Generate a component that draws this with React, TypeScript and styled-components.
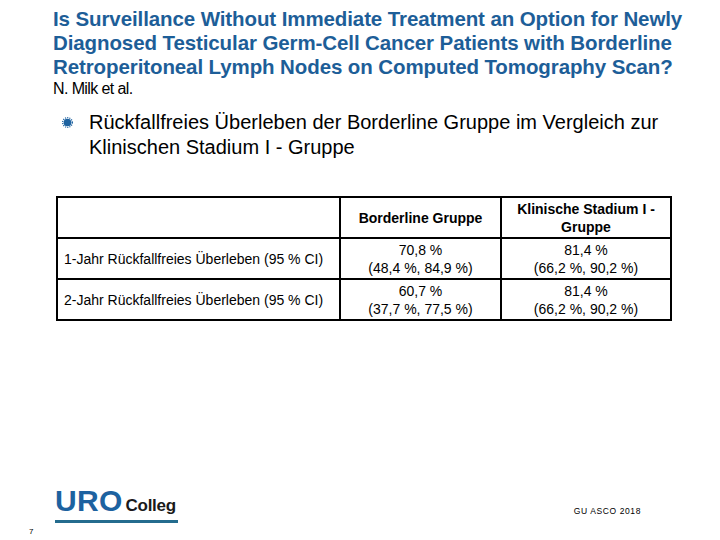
import React from 'react'
import styled, { createGlobalStyle } from 'styled-components'

const GlobalStyle = createGlobalStyle`
  html, body {
    margin: 0;
    padding: 0;
    background: #ffffff;
  }
  body {
    font-family: 'Liberation Sans', Arial, sans-serif;
    color: #000;
  }
`

const Slide = styled.div`
  width: 720px;
  height: 540px;
  position: relative;
  overflow: hidden;
  display: flex;
  flex-direction: column;
`

const Header = styled.div`
  padding: 7px 0 0 53px;
`

const Title = styled.h1`
  margin: 0;
  font-size: 20.5px;
  line-height: 24px;
  font-weight: 700;
  color: #1d5e98;
  letter-spacing: -0.1px;
  white-space: nowrap;
`

const Authors = styled.p`
  margin: 1px 0 0;
  font-size: 16px;
  line-height: 18px;
  letter-spacing: -0.6px;
`

const BulletRow = styled.div`
  display: flex;
  align-items: flex-start;
  gap: 16px;
  padding: 12px 0 0 62px;
`

const Bullet = styled.span`
  flex: none;
  width: 11px;
  height: 11px;
  margin-top: 7px;
  display: flex;
`

const BulletText = styled.p`
  margin: 0;
  font-size: 20px;
  line-height: 25px;
  width: 600px;
`

const Table = styled.table`
  margin: 36px 0 0 56px;
  width: 614px;
  border-collapse: collapse;
  font-size: 14px;
  border: 2px solid #000;
  table-layout: fixed;
`

const Cell = styled.td<{ $head?: boolean; $left?: boolean }>`
  border: 2px solid #000;
  height: 39px;
  padding: 0 6px;
  text-align: ${p => (p.$left ? 'left' : 'center')};
  font-weight: ${p => (p.$head ? 700 : 400)};
  line-height: 18px;
  vertical-align: middle;
`

const Footer = styled.div`
  margin-top: auto;
  display: flex;
  align-items: flex-end;
  justify-content: space-between;
  padding: 0 79px 17px 55px;
`

const Logo = styled.div`
  display: flex;
  flex-direction: column;
  width: 123px;
`

const LogoWords = styled.div`
  display: flex;
  align-items: baseline;
  gap: 3px;
`

const Uro = styled.span`
  font-size: 30px;
  line-height: 28px;
  font-weight: 700;
  color: #1d62a0;
  letter-spacing: 0.3px;
`

const Colleg = styled.span`
  font-size: 17px;
  font-weight: 700;
  color: #1a1a1a;
  letter-spacing: -0.3px;
`

const LogoRule = styled.div`
  height: 3px;
  background: #246c8e;
  margin-top: 4px;
`

const Source = styled.span`
  font-size: 8.5px;
  letter-spacing: 0.6px;
  margin-bottom: 7px;
`

const PageNo = styled.span`
  position: absolute;
  left: 29px;
  bottom: 4px;
  font-size: 8px;
`

const StarBullet = () => (
  <svg width="11" height="11" viewBox="0 0 12 12">
    <circle cx="6" cy="6" r="4.2" fill="#1d62a0" />
    <circle cx="6" cy="6" r="5.3" fill="none" stroke="#1d62a0" strokeWidth="1.4" strokeDasharray="1.2 1.2" />
  </svg>
)

const rows = [
  ['1-Jahr Rückfallfreies Überleben (95 % CI)', ['70,8 %', '(48,4 %, 84,9 %)'], ['81,4 %', '(66,2 %, 90,2 %)']],
  ['2-Jahr Rückfallfreies Überleben (95 % CI)', ['60,7 %', '(37,7 %, 77,5 %)'], ['81,4 %', '(66,2 %, 90,2 %)']],
] as const

export default function App() {
  return (
    <Slide>
      <GlobalStyle />
      <Header>
        <Title>
          Is Surveillance Without Immediate Treatment an Option for Newly
          <br />
          Diagnosed Testicular Germ-Cell Cancer Patients with Borderline
          <br />
          Retroperitoneal Lymph Nodes on Computed Tomography Scan?
        </Title>
        <Authors>N. Milk et al.</Authors>
      </Header>

      <BulletRow>
        <Bullet><StarBullet /></Bullet>
        <BulletText>Rückfallfreies Überleben der Borderline Gruppe im Vergleich zur Klinischen Stadium I - Gruppe</BulletText>
      </BulletRow>

      <Table>
        <colgroup>
          <col style={{ width: 283 }} />
          <col style={{ width: 161 }} />
          <col style={{ width: 170 }} />
        </colgroup>
        <tbody>
          <tr>
            <Cell />
            <Cell $head>Borderline Gruppe</Cell>
            <Cell $head>Klinische Stadium I -<br />Gruppe</Cell>
          </tr>
          {rows.map(([label, a, b]) => (
            <tr key={label}>
              <Cell $left>{label}</Cell>
              <Cell>{a[0]}<br />{a[1]}</Cell>
              <Cell>{b[0]}<br />{b[1]}</Cell>
            </tr>
          ))}
        </tbody>
      </Table>

      <Footer>
        <Logo>
          <LogoWords>
            <Uro>URO</Uro>
            <Colleg>Colleg</Colleg>
          </LogoWords>
          <LogoRule />
        </Logo>
        <Source>GU ASCO 2018</Source>
      </Footer>
      <PageNo>7</PageNo>
    </Slide>
  )
}
